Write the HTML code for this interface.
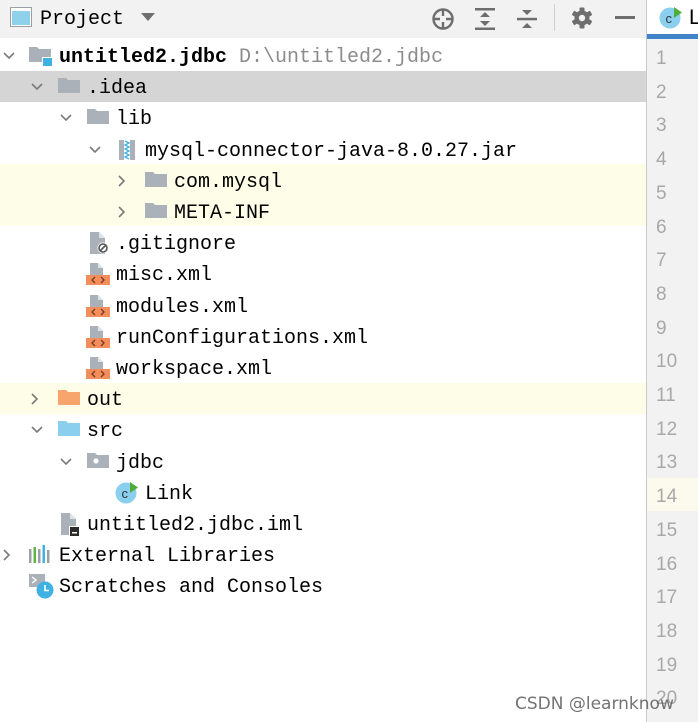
<!DOCTYPE html>
<html><head><meta charset="utf-8"><style>
*{margin:0;padding:0;box-sizing:border-box}
body{width:698px;height:722px;overflow:hidden;background:#fff;position:relative;font-family:"Liberation Mono",monospace;font-size:20px;color:#000}
.a{position:absolute}
.row{position:absolute;left:0;width:646px;height:31.2px}
.t{position:absolute;top:2px;line-height:31px;white-space:pre}
.ch{position:absolute;top:9px}
.ic{position:absolute;top:5px}
.ln{position:absolute;left:647px;width:51px;height:33.7px;line-height:33.7px;font-family:"Liberation Sans",sans-serif;font-size:19px;color:#a8a8a8;padding-left:9px;padding-top:2px}
</style></head><body>
<div class="a" style="left:0;top:0;width:646px;height:38px;background:#f2f2f2"></div>
<svg class="a" style="left:10px;top:7px" width="22" height="20"><rect x="0.5" y="0.5" width="21" height="19" fill="#fff" stroke="#9aa0a6"/><rect x="2" y="4" width="18" height="14" fill="#8fd0ea"/></svg>
<div class="a" style="left:40px;top:7px;font-family:'Liberation Mono',monospace;font-size:20px;line-height:26px">Project</div>
<svg class="a" style="left:141px;top:13px" width="14" height="9"><path d="M0 0h14l-7 8z" fill="#6e6e6e"/></svg>
<svg class="a" style="left:431px;top:7px" width="24" height="24" fill="none" stroke="#6e6e6e" stroke-width="2.4"><circle cx="12" cy="12" r="9.5"/><path d="M12 2v7M12 15v7M2 12h7M15 12h7"/></svg>
<svg class="a" style="left:474px;top:7px" width="22" height="24"><rect x="1" y="1" width="20" height="2.5" fill="#6e6e6e"/><rect x="1" y="20.5" width="20" height="2.5" fill="#6e6e6e"/><path d="M6 10l5-5 5 5zM6 14l5 5 5-5z" fill="#6e6e6e"/></svg>
<svg class="a" style="left:516px;top:7px" width="22" height="24"><rect x="1" y="10.8" width="20" height="2.5" fill="#6e6e6e"/><path d="M6 3l5 5 5-5zM6 21l5-5 5 5z" fill="#6e6e6e"/></svg>
<div class="a" style="left:554px;top:4px;width:1px;height:27px;background:#d0d0d0"></div>
<svg class="a" style="left:571px;top:7px" width="22" height="22"><g fill="#6e6e6e"><circle cx="11" cy="11" r="7.5"/><rect x="8.5" y="0.5" width="5" height="21" rx="1"/><rect x="8.5" y="0.5" width="5" height="21" rx="1" transform="rotate(60 11 11)"/><rect x="8.5" y="0.5" width="5" height="21" rx="1" transform="rotate(120 11 11)"/></g><circle cx="11" cy="11" r="3.2" fill="#f2f2f2"/></svg>
<div class="a" style="left:615px;top:16px;width:20px;height:3px;background:#6e6e6e"></div>
<div class="a" style="left:646px;top:0;width:1px;height:722px;background:#c9c9c9"></div>
<div class="a" style="left:647px;top:0;width:51px;height:722px;background:#f2f2f2"></div>
<div class="a" style="left:647px;top:0;width:51px;height:35px;background:#fff"></div>
<div class="a" style="left:647px;top:34px;width:51px;height:5px;background:#4083c9"></div>
<svg class="a" style="left:659px;top:5px" width="26" height="24"><circle cx="11" cy="13" r="10.5" fill="#8bcfee"/><text x="6.5" y="18" font-family="Liberation Sans" font-size="13" fill="#333">c</text><path d="M15 2v11l8-5.5z" fill="#4fad3a"/></svg>
<div class="a" style="left:689px;top:5px;font-family:'Liberation Sans',sans-serif;font-size:21px;line-height:26px">L</div>
<div class="a" style="left:647px;top:478px;width:51px;height:33px;background:#fcfaed"></div>
<div class="ln" style="top:40px">1</div><div class="ln" style="top:73.7px">2</div><div class="ln" style="top:107.4px">3</div><div class="ln" style="top:141.1px">4</div><div class="ln" style="top:174.8px">5</div><div class="ln" style="top:208.5px">6</div><div class="ln" style="top:242.2px">7</div><div class="ln" style="top:275.9px">8</div><div class="ln" style="top:309.6px">9</div><div class="ln" style="top:343.3px">10</div><div class="ln" style="top:377px">11</div><div class="ln" style="top:410.7px">12</div><div class="ln" style="top:444.4px">13</div><div class="ln" style="top:478.1px">14</div><div class="ln" style="top:511.8px">15</div><div class="ln" style="top:545.5px">16</div><div class="ln" style="top:579.2px">17</div><div class="ln" style="top:612.9px">18</div><div class="ln" style="top:646.6px">19</div><div class="ln" style="top:680.3px">20</div>

<div class="a" style="left:0;top:71px;width:646px;height:31px;background:#d5d5d5"></div>
<div class="a" style="left:0;top:164px;width:646px;height:62px;background:#fefde8"></div>
<div class="a" style="left:0;top:383px;width:646px;height:31px;background:#fefde8"></div>

<div class="row" style="top:40px">
<svg class="ch" style="left:2px" width="14" height="14" fill="none" stroke="#7a7a7a" stroke-width="1.6"><path d="M2 4l5 5 5-5"/></svg>
<svg class="ic" style="left:29px" width="24" height="22"><path d="M0 2h8l2 2h12v13H0z" fill="#aab1b8"/><rect x="13" y="12" width="10" height="9" fill="#fff"/><rect x="14" y="13" width="9" height="8" fill="#3fb2e3"/></svg>
<div class="t" style="left:59px;font-weight:bold">untitled2.jdbc <span style="font-weight:normal;color:#8c8c8c">D:\untitled2.jdbc</span></div></div>
<div class="row" style="top:71.2px">
<svg class="ch" style="left:30px" width="14" height="14" fill="none" stroke="#7a7a7a" stroke-width="1.6"><path d="M2 4l5 5 5-5"/></svg>
<svg class="ic" style="left:58px" width="22" height="20"><path d="M0 2h8l2 2h12v13H0z" fill="#aab1b8"/></svg>
<div class="t" style="left:87px">.idea</div></div>
<div class="row" style="top:102.4px">
<svg class="ch" style="left:59px" width="14" height="14" fill="none" stroke="#7a7a7a" stroke-width="1.6"><path d="M2 4l5 5 5-5"/></svg>
<svg class="ic" style="left:87px" width="22" height="20"><path d="M0 2h8l2 2h12v13H0z" fill="#aab1b8"/></svg>
<div class="t" style="left:116px">lib</div></div>
<div class="row" style="top:133.6px">
<svg class="ch" style="left:88px" width="14" height="14" fill="none" stroke="#7a7a7a" stroke-width="1.6"><path d="M2 4l5 5 5-5"/></svg>
<svg class="ic" style="left:118px" width="18" height="22"><rect x="1" y="1" width="16" height="20" fill="#aab1b8"/><rect x="6" y="1" width="6" height="20" fill="#fff"/><path d="M7 2l4 2-4 2 4 2-4 2 4 2-4 2 4 2-4 2 4 2" stroke="#3fb2e3" stroke-width="1.3" fill="none"/></svg>
<div class="t" style="left:145px">mysql-connector-java-8.0.27.jar</div></div>
<div class="row" style="top:164.8px">
<svg class="ch" style="left:115px" width="14" height="14" fill="none" stroke="#7a7a7a" stroke-width="1.6"><path d="M4 2l5 5-5 5"/></svg>
<svg class="ic" style="left:145px" width="22" height="20"><path d="M0 2h8l2 2h12v13H0z" fill="#aab1b8"/></svg>
<div class="t" style="left:174px">com.mysql</div></div>
<div class="row" style="top:196px">
<svg class="ch" style="left:115px" width="14" height="14" fill="none" stroke="#7a7a7a" stroke-width="1.6"><path d="M4 2l5 5-5 5"/></svg>
<svg class="ic" style="left:145px" width="22" height="20"><path d="M0 2h8l2 2h12v13H0z" fill="#aab1b8"/></svg>
<div class="t" style="left:174px">META-INF</div></div>
<div class="row" style="top:227.2px">
<svg class="ic" style="left:88px" width="22" height="22"><path d="M2 0h9l6 6v16H2z" fill="#aab1b8"/><path d="M11 0v6h6" fill="#dfe2e5"/><circle cx="15" cy="16" r="5.5" fill="#fff"/><circle cx="15" cy="16" r="4" fill="none" stroke="#555" stroke-width="1.6"/><path d="M12 19l6-6" stroke="#555" stroke-width="1.6"/></svg>
<div class="t" style="left:116px">.gitignore</div></div>
<div class="row" style="top:258.4px">
<svg class="ic" style="left:86px" width="24" height="22"><path d="M4 0h8l5 5v7H4z" fill="#aab1b8"/><path d="M12 0v5h5" fill="#dfe2e5"/><rect x="0" y="12" width="24" height="10" fill="#f28d5c"/><path d="M9 14l-3 3 3 3M15 14l3 3-3 3" stroke="#7a3a1a" stroke-width="1.3" fill="none"/></svg>
<div class="t" style="left:116px">misc.xml</div></div>
<div class="row" style="top:289.6px">
<svg class="ic" style="left:86px" width="24" height="22"><path d="M4 0h8l5 5v7H4z" fill="#aab1b8"/><path d="M12 0v5h5" fill="#dfe2e5"/><rect x="0" y="12" width="24" height="10" fill="#f28d5c"/><path d="M9 14l-3 3 3 3M15 14l3 3-3 3" stroke="#7a3a1a" stroke-width="1.3" fill="none"/></svg>
<div class="t" style="left:116px">modules.xml</div></div>
<div class="row" style="top:320.8px">
<svg class="ic" style="left:86px" width="24" height="22"><path d="M4 0h8l5 5v7H4z" fill="#aab1b8"/><path d="M12 0v5h5" fill="#dfe2e5"/><rect x="0" y="12" width="24" height="10" fill="#f28d5c"/><path d="M9 14l-3 3 3 3M15 14l3 3-3 3" stroke="#7a3a1a" stroke-width="1.3" fill="none"/></svg>
<div class="t" style="left:116px">runConfigurations.xml</div></div>
<div class="row" style="top:352px">
<svg class="ic" style="left:86px" width="24" height="22"><path d="M4 0h8l5 5v7H4z" fill="#aab1b8"/><path d="M12 0v5h5" fill="#dfe2e5"/><rect x="0" y="12" width="24" height="10" fill="#f28d5c"/><path d="M9 14l-3 3 3 3M15 14l3 3-3 3" stroke="#7a3a1a" stroke-width="1.3" fill="none"/></svg>
<div class="t" style="left:116px">workspace.xml</div></div>
<div class="row" style="top:383.2px">
<svg class="ch" style="left:28px" width="14" height="14" fill="none" stroke="#7a7a7a" stroke-width="1.6"><path d="M4 2l5 5-5 5"/></svg>
<svg class="ic" style="left:58px" width="22" height="20"><path d="M0 2h8l2 2h12v13H0z" fill="#f7a56c"/></svg>
<div class="t" style="left:87px">out</div></div>
<div class="row" style="top:414.4px">
<svg class="ch" style="left:30px" width="14" height="14" fill="none" stroke="#7a7a7a" stroke-width="1.6"><path d="M2 4l5 5 5-5"/></svg>
<svg class="ic" style="left:58px" width="22" height="20"><path d="M0 2h8l2 2h12v13H0z" fill="#8bcfee"/></svg>
<div class="t" style="left:87px">src</div></div>
<div class="row" style="top:445.6px">
<svg class="ch" style="left:59px" width="14" height="14" fill="none" stroke="#7a7a7a" stroke-width="1.6"><path d="M2 4l5 5 5-5"/></svg>
<svg class="ic" style="left:87px" width="22" height="20"><path d="M0 2h8l2 2h12v13H0z" fill="#aab1b8"/><circle cx="9" cy="10" r="2.6" fill="#fff"/></svg>
<div class="t" style="left:116px">jdbc</div></div>
<div class="row" style="top:476.8px">
<svg class="ic" style="left:115px;top:3px" width="26" height="24"><circle cx="11" cy="13" r="10.5" fill="#8bcfee"/><text x="6.5" y="18" font-family="Liberation Sans" font-size="13" fill="#333">c</text><path d="M15 2v11l8-5.5z" fill="#4fad3a"/></svg>
<div class="t" style="left:145px">Link</div></div>
<div class="row" style="top:508px">
<svg class="ic" style="left:59px" width="22" height="24"><path d="M2 0h9l6 6v16H2z" fill="#aab1b8"/><path d="M11 0v6h6" fill="#dfe2e5"/><rect x="10" y="13" width="11" height="10" fill="#fff"/><rect x="11" y="14" width="9" height="9" fill="#2b2b2b"/><rect x="13" y="19" width="5" height="1.5" fill="#fff"/></svg>
<div class="t" style="left:87px">untitled2.jdbc.iml</div></div>
<div class="row" style="top:539.2px">
<svg class="ch" style="left:0px" width="14" height="14" fill="none" stroke="#7a7a7a" stroke-width="1.6"><path d="M4 2l5 5-5 5"/></svg>
<svg class="ic" style="left:29px" width="24" height="20"><rect x="0" y="5" width="2.5" height="14" fill="#9aa0a6"/><rect x="4.5" y="3" width="2.5" height="16" fill="#5fb548"/><rect x="9" y="5" width="2.5" height="14" fill="#9aa0a6"/><rect x="13.5" y="1" width="2.5" height="18" fill="#3fb2e3"/><rect x="18" y="6" width="2.5" height="13" fill="#9aa0a6"/></svg>
<div class="t" style="left:59px">External Libraries</div></div>
<div class="row" style="top:570.4px">
<svg class="ic" style="left:29px;top:4px" width="26" height="26"><rect x="0" y="0" width="16" height="13" fill="#aab1b8"/><path d="M3 3l4 3-4 3" stroke="#fff" stroke-width="1.4" fill="none"/><circle cx="16" cy="16" r="8.5" fill="#3fb2e3"/><path d="M16 11v5.5h4" stroke="#fff" stroke-width="1.6" fill="none"/></svg>
<div class="t" style="left:59px">Scratches and Consoles</div></div>

<div class="a" style="left:515px;top:692px;font-family:'DejaVu Sans','Liberation Sans',sans-serif;font-size:17px;line-height:24px;color:rgba(90,90,90,0.85)">CSDN @learnknow</div>
</body></html>
